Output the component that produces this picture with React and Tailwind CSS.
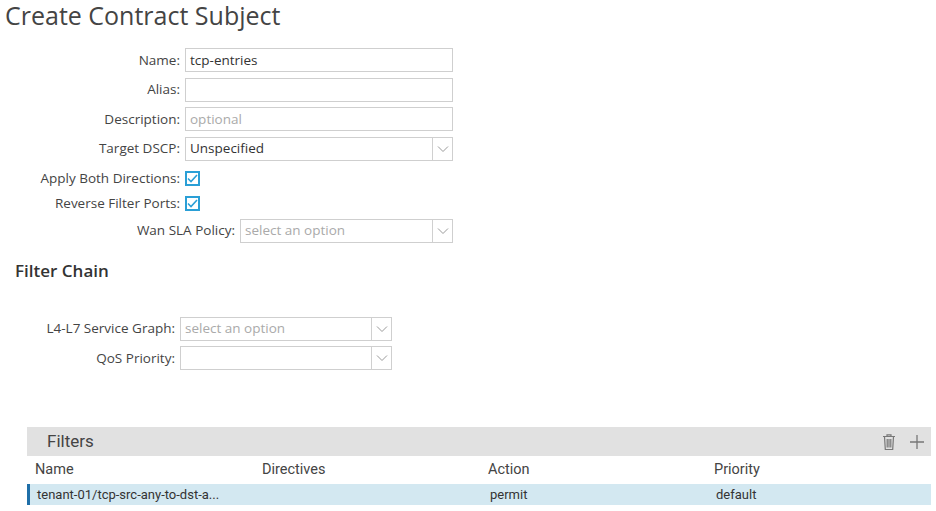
const F = { fontFamily: '"Open Sans", "Liberation Sans", sans-serif' };

function Chevron() {
  return (
    <div className="w-[20px] h-full border-l border-[#d0d0d0] flex items-center justify-center">
      <svg width="12" height="8" viewBox="0 0 12 8"><path d="M1 1.5 L6 6.5 L11 1.5" fill="none" stroke="#9a9a9a" strokeWidth="1" /></svg>
    </div>
  );
}
function Check() {
  return (
    <div className="w-[15px] h-[15px] border-2 border-[#2a9fd6] flex items-center justify-center bg-white">
      <svg width="11" height="9" viewBox="0 0 11 9"><path d="M1 4.5 L4 7.5 L10 1" fill="none" stroke="#2a9fd6" strokeWidth="1.6" /></svg>
    </div>
  );
}
function Row({ label, lw, children, mt = "mt-[5.5px]" }) {
  return (
    <div className={`flex items-center h-[24px] ${mt}`}>
      <div className="text-right text-[13.5px] text-[#444] pr-[5px]" style={{ width: lw }}>{label}</div>
      {children}
    </div>
  );
}
function Input({ w, text, ph, select }) {
  return (
    <div className="h-[24px] border border-[#cfcfcf] bg-white flex items-center" style={{ width: w }}>
      <div className={`flex-1 px-[4px] text-[13.5px] ${ph ? "text-[#aaa]" : "text-[#333]"}`}>{text}</div>
      {select && <Chevron />}
    </div>
  );
}

export default function App() {
  return (
    <div className="w-[936px] h-[511px] bg-white overflow-hidden relative" style={F}>
      <div className="pl-[5px] pt-[0px] text-[25px] text-[#444] leading-[30px]">Create Contract Subject</div>
      <div className="mt-[18px]">
        <Row label="Name:" lw={185} mt="mt-0"><Input w={268} text="tcp-entries" /></Row>
        <Row label="Alias:" lw={185}><Input w={268} text="" /></Row>
        <Row label="Description:" lw={185}><Input w={268} text="optional" ph /></Row>
        <Row label="Target DSCP:" lw={185}><Input w={268} text="Unspecified" select /></Row>
        <div className="flex items-center h-[20px] mt-[8px]">
          <div className="w-[185px] text-right pr-[5px] text-[13.5px] text-[#444]">Apply Both Directions:</div><Check />
        </div>
        <div className="flex items-center h-[20px] mt-[5px]">
          <div className="w-[185px] text-right pr-[5px] text-[13.5px] text-[#444]">Reverse Filter Ports:</div><Check />
        </div>
        <Row label="Wan SLA Policy:" lw={240} mt="mt-[5px]"><Input w={213} text="select an option" ph select /></Row>
      </div>
      <div className="pl-[15px] mt-[17px] text-[17px] font-semibold text-[#333] leading-[22px]">Filter Chain</div>
      <div className="mt-[35px]">
        <Row label="L4-L7 Service Graph:" lw={180} mt="mt-0"><Input w={212} text="select an option" ph select /></Row>
        <Row label="QoS Priority:" lw={180}><Input w={212} text="" select /></Row>
      </div>
      <div className="ml-[27px] mr-[5px] mt-[57px]" style={{ fontFamily: '"Roboto", "Liberation Sans", sans-serif' }}>
        <div className="h-[29px] bg-[#e1e1e1] flex items-center pl-[20px] pr-[6px]">
          <div className="flex-1 text-[17px] text-[#444]">Filters</div>
          <svg width="16" height="18" viewBox="0 0 16 18" className="mr-[12px]"><path d="M2 3.5h12M6 3.5V1.8h4v1.7M3.5 3.5l.8 13h7.4l.8-13M6.2 6v8.5M8 6v8.5M9.8 6v8.5" fill="none" stroke="#777" strokeWidth="1.2" /></svg>
          <svg width="16" height="16" viewBox="0 0 16 16"><path d="M8 1v14M1 8h14" stroke="#777" strokeWidth="1.3" /></svg>
        </div>
        <div className="flex h-[28px] items-center text-[14.5px] text-[#444] pl-[8px]">
          <div className="w-[227px]">Name</div><div className="w-[226px]">Directives</div><div className="w-[226px]">Action</div><div>Priority</div>
        </div>
        <div className="flex h-[21px] items-center text-[13px] text-[#333] bg-[#d3e8f1] border-l-[3px] border-[#1f6fa8] pl-[7px]">
          <div className="w-[227px]">tenant-01/tcp-src-any-to-dst-a...</div><div className="w-[226px]"></div><div className="w-[226px]">permit</div><div>default</div>
        </div>
      </div>
    </div>
  );
}
